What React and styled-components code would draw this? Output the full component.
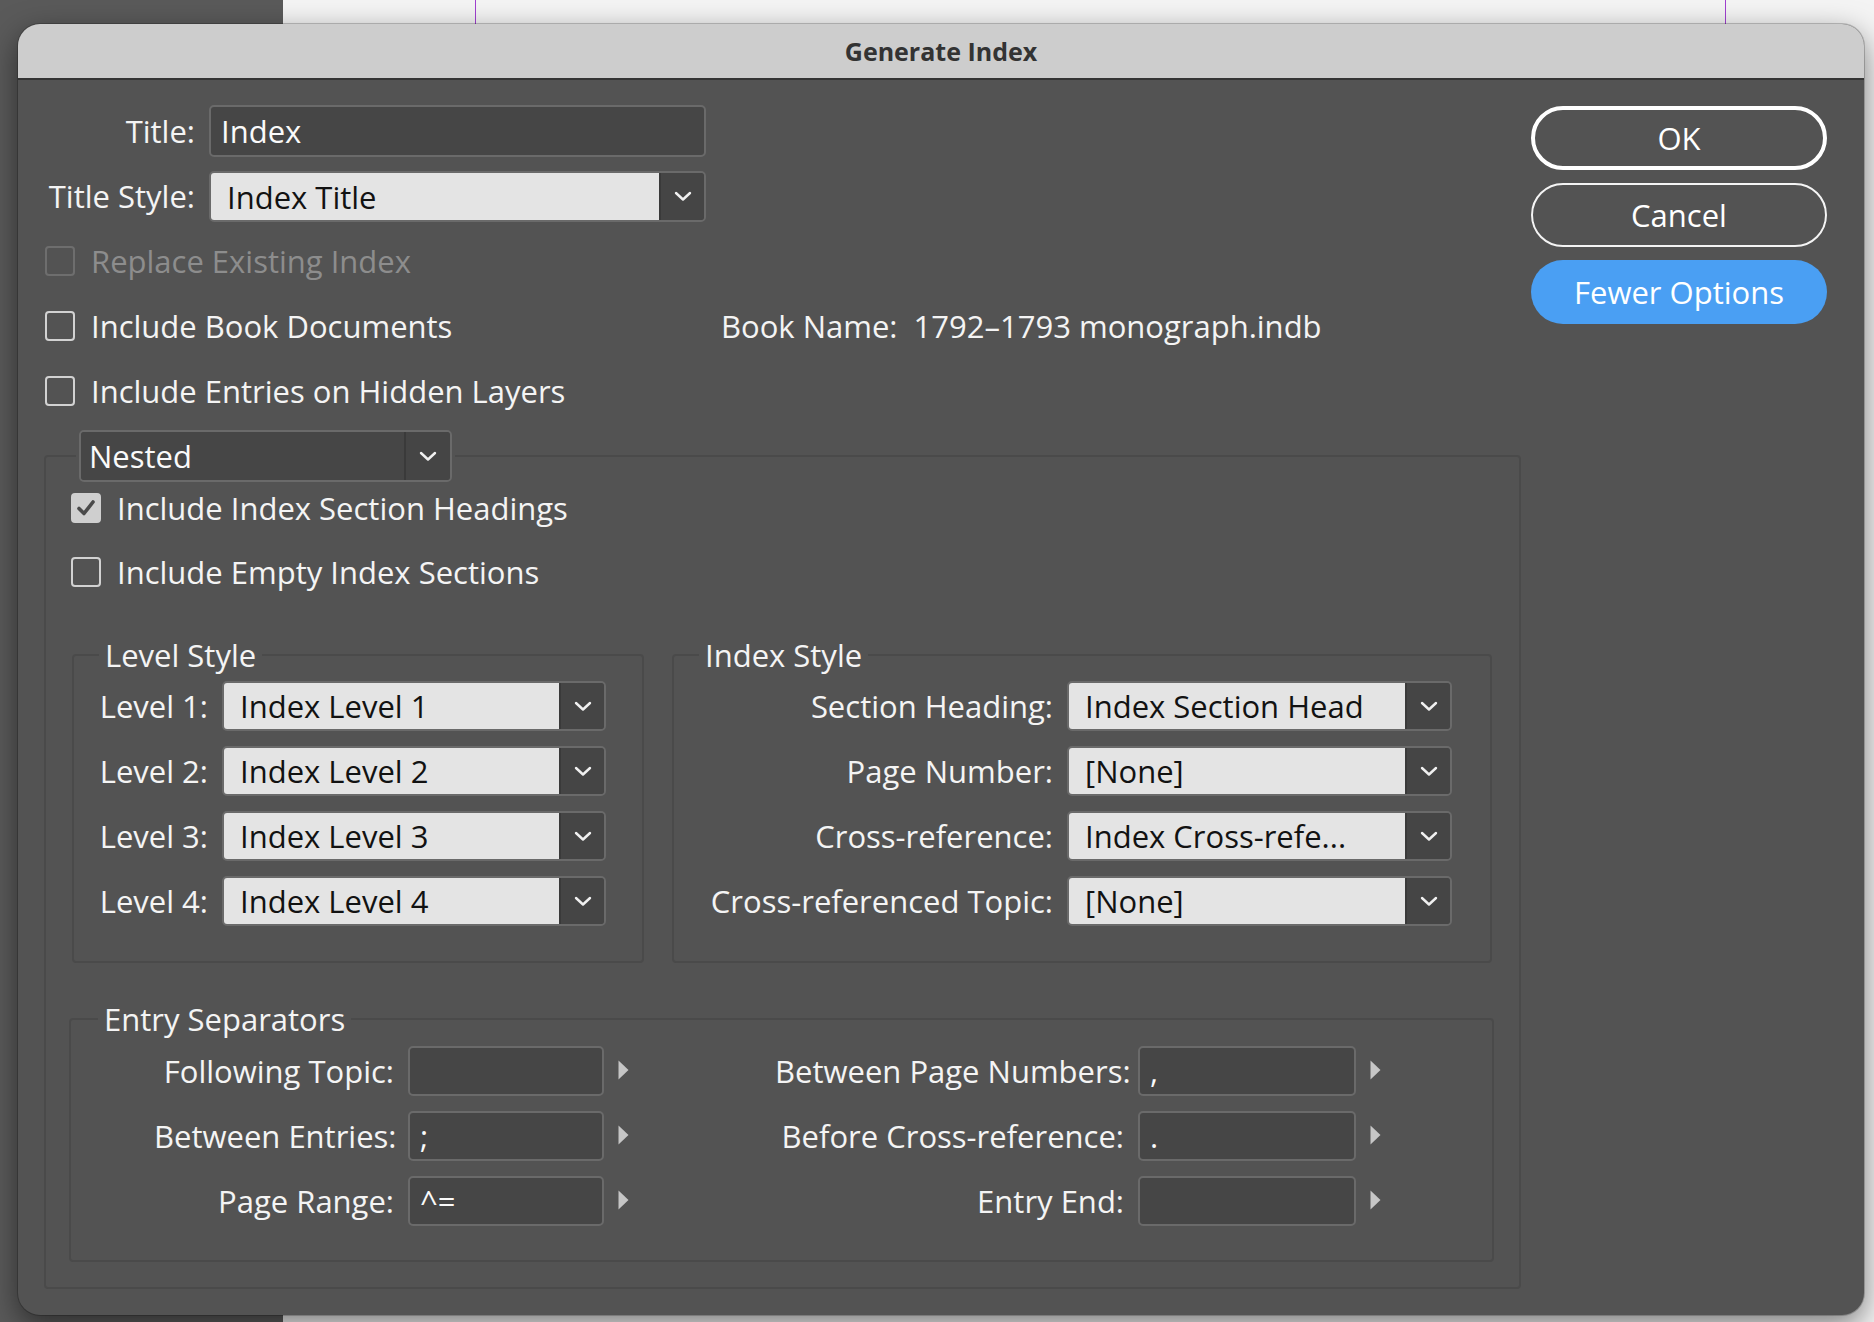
import React from 'react';
import styled, { createGlobalStyle } from 'styled-components';

const GlobalStyle = createGlobalStyle`
  html, body { margin: 0; padding: 0; }
  body {
    width: 1874px;
    height: 1322px;
    overflow: hidden;
    font-family: "Open Sans", "Noto Sans", "DejaVu Sans", sans-serif;
    background:
      linear-gradient(to right, transparent 475px, #a040d0 475px, #a040d0 476px, transparent 476px, transparent 1725px, #a040d0 1725px, #a040d0 1726px, transparent 1726px) top left / 100% 40px no-repeat,
      linear-gradient(to right, #5a5a5a 0, #5a5a5a 283px, #f4f4f4 283px);
  }
  * { box-sizing: border-box; }
`;

const Dialog = styled.div`
  margin: 24px 0 0 18px;
  width: 1846px;
  background: #535353;
  border-radius: 22px;
  overflow: hidden;
  box-shadow: 0 10px 30px rgba(0, 0, 0, 0.5), 0 0 0 1px rgba(0, 0, 0, 0.2);
`;

const TitleBar = styled.div`
  height: 56px;
  background: #cdcdcd;
  border-bottom: 2px solid #343434;
  display: flex;
  align-items: center;
  justify-content: center;
  font-size: 25px;
  font-weight: 700;
  color: #333333;
`;

const Body = styled.div`
  display: flex;
  padding: 25px 37px 26px 26px;
  color: #f4f4f4;
  font-size: 31px;
`;

const Main = styled.div`
  flex: 1;
  display: flex;
  flex-direction: column;
`;

const FieldGrid = styled.div`
  display: grid;
  grid-template-columns: 151px 497px;
  column-gap: 14px;
  row-gap: 14px;
  align-items: center;
`;

const Label = styled.div`
  text-align: right;
  white-space: nowrap;
  line-height: 1;
`;

const TextBox = styled.div`
  height: ${p => p.$h || 52}px;
  background: #464646;
  border: 2px solid #6a6a6a;
  border-radius: 5px;
  padding: 0 10px;
  display: flex;
  align-items: center;
  color: #fafafa;
  white-space: nowrap;
`;

const SelectBox = styled.div`
  display: flex;
  height: ${p => p.$h || 50}px;
  width: ${p => (p.$w ? `${p.$w}px` : 'auto')};
  border: 2px solid #6a6a6a;
  border-radius: 5px;
  overflow: hidden;
`;

const SelectValue = styled.div`
  flex: 1;
  display: flex;
  align-items: center;
  padding-left: ${p => (p.$light ? 16 : 8)}px;
  background: ${p => (p.$light ? '#e4e4e4' : '#464646')};
  color: ${p => (p.$light ? '#121212' : '#fafafa')};
  white-space: nowrap;
`;

const SelectArrow = styled.div`
  width: ${p => p.$aw || 44}px;
  background: #454545;
  border-left: 2px solid #3a3a3a;
  display: flex;
  align-items: center;
  justify-content: center;
`;

const Chevron = () => (
  <svg width="18" height="11" viewBox="0 0 18 11">
    <polyline points="2,2 9,8.5 16,2" fill="none" stroke="#f0f0f0" strokeWidth="2.4" strokeLinecap="round" strokeLinejoin="round" />
  </svg>
);

const Select = ({ value, light, h, w, aw }) => (
  <SelectBox $h={h} $w={w}>
    <SelectValue $light={light}>{value}</SelectValue>
    <SelectArrow $aw={aw}>
      <Chevron />
    </SelectArrow>
  </SelectBox>
);

const CheckList = styled.div`
  display: flex;
  flex-direction: column;
  gap: ${p => p.$gap || 25}px;
  margin-top: ${p => p.$mt || 0}px;
`;

const CheckRow = styled.div`
  display: flex;
  align-items: center;
  height: 40px;
  color: ${p => (p.$disabled ? '#8d8d8d' : '#f4f4f4')};
  white-space: nowrap;
`;

const CheckItem = styled.div`
  display: flex;
  align-items: center;
  gap: 16px;
  width: ${p => (p.$w ? `${p.$w}px` : 'auto')};
  margin-left: ${p => p.$ml ?? 1}px;
`;

const Box = styled.div`
  width: 30px;
  height: 30px;
  border-radius: 4px;
  border: 2px solid ${p => (p.$checked ? '#cfcfcf' : p.$disabled ? '#6e6e6e' : '#d2d2d2')};
  background: ${p => (p.$checked ? '#cfcfcf' : 'transparent')};
  display: flex;
  align-items: center;
  justify-content: center;
`;

const Check = ({ checked, disabled, children, w, ml }) => (
  <CheckItem $w={w} $ml={ml}>
    <Box $checked={checked} $disabled={disabled}>
      {checked && (
        <svg width="20" height="18" viewBox="0 0 20 18">
          <polyline points="3,9.5 8,14.5 17,3" fill="none" stroke="#4a4a4a" strokeWidth="3.6" strokeLinecap="round" strokeLinejoin="round" />
        </svg>
      )}
    </Box>
    <span>{children}</span>
  </CheckItem>
);

const Group = styled.fieldset`
  margin: ${p => p.$margin || '0'};
  min-width: 0;
  width: ${p => (p.$w ? `${p.$w}px` : 'auto')};
  border: 2px solid #4a4a4a;
  border-radius: 4px;
  padding: ${p => p.$pad};
`;

const Legend = styled.legend`
  padding: 0 ${p => (p.$px !== undefined ? p.$px : 6)}px;
  margin-left: ${p => p.$ml || 0}px;
  line-height: 40px;
  color: #f4f4f4;
  white-space: nowrap;
`;

const GroupsRow = styled.div`
  display: flex;
  gap: 28px;
  margin-top: 43px;
`;

const StyleGrid = styled.div`
  display: grid;
  grid-template-columns: 1fr ${p => p.$w}px;
  column-gap: 14px;
  row-gap: 15px;
  align-items: center;
`;

const SepRow = styled.div`
  display: flex;
  margin-left: 56px;
`;

const SepGrid = styled.div`
  display: grid;
  grid-template-columns: ${p => p.$labelW}px ${p => p.$inputW}px 11px;
  column-gap: 14px;
  row-gap: 15px;
  align-items: center;
  margin-left: ${p => p.$ml || 0}px;
`;

const Tri = () => (
  <svg width="11" height="20" viewBox="0 0 11 20" style={{ marginTop: -3 }}>
    <polygon points="0.5,0.5 10.5,10 0.5,19.5" fill="#c6c6c6" />
  </svg>
);

const Buttons = styled.div`
  width: 298px;
  margin-left: 10px;
  display: flex;
  flex-direction: column;
  gap: 13px;
  padding-top: 1px;
`;

const Button = styled.button`
  height: 64px;
  border-radius: 32px;
  font-family: inherit;
  font-size: 31px;
  color: #ffffff;
  background: ${p => (p.$blue ? '#4a9ff3' : 'transparent')};
  border: ${p => (p.$blue ? 'none' : p.$default ? '4px solid #ffffff' : '2.5px solid #f4f4f4')};
  padding: 0;
  cursor: default;
`;

const levels = ['Index Level 1', 'Index Level 2', 'Index Level 3', 'Index Level 4'];
const indexStyles = [
  ['Section Heading:', 'Index Section Head'],
  ['Page Number:', '[None]'],
  ['Cross-reference:', 'Index Cross-refe...'],
  ['Cross-referenced Topic:', '[None]'],
];
const sepLeft = [
  ['Following Topic:', ''],
  ['Between Entries:', ';'],
  ['Page Range:', '^='],
];
const sepRight = [
  ['Between Page Numbers:', ','],
  ['Before Cross-reference:', '.'],
  ['Entry End:', ''],
];

export default function App() {
  return (
    <>
      <GlobalStyle />
      <Dialog>
        <TitleBar>Generate Index</TitleBar>
        <Body>
          <Main>
            <FieldGrid>
              <Label>Title:</Label>
              <TextBox>Index</TextBox>
              <Label>Title Style:</Label>
              <Select value="Index Title" light h={51} aw={45} />
            </FieldGrid>

            <CheckList $mt={19} $gap={25}>
              <CheckRow $disabled>
                <Check disabled>Replace Existing Index</Check>
              </CheckRow>
              <CheckRow>
                <Check w={676}>Include Book Documents</Check>
                <span>Book Name:&nbsp; 1792–1793 monograph.indb</span>
              </CheckRow>
              <CheckRow>
                <Check>Include Entries on Hidden Layers</Check>
              </CheckRow>
            </CheckList>

            <Group $margin="19px 0 0 0" $pad="6px 25px 25px 26px">
              <Legend $px={3} $ml={4}>
                <Select value="Nested" h={52} w={373} aw={46} />
              </Legend>
              <CheckList $gap={24}>
                <CheckRow>
                  <Check checked ml={-1}>Include Index Section Headings</Check>
                </CheckRow>
                <CheckRow>
                  <Check ml={-1}>Include Empty Index Sections</Check>
                </CheckRow>
              </CheckList>

              <GroupsRow>
                <Group $w={572} $pad="6px 36px 35px 22px">
                  <Legend $ml={3}>Level Style</Legend>
                  <StyleGrid $w={384}>
                    {levels.map((v, i) => (
                      <React.Fragment key={v}>
                        <Label>{`Level ${i + 1}:`}</Label>
                        <Select value={v} light h={50} aw={45} />
                      </React.Fragment>
                    ))}
                  </StyleGrid>
                </Group>
                <Group $w={820} $pad="6px 38px 35px 25px">
                  <Legend>Index Style</Legend>
                  <StyleGrid $w={385}>
                    {indexStyles.map(([l, v]) => (
                      <React.Fragment key={l}>
                        <Label>{l}</Label>
                        <Select value={v} light h={50} aw={45} />
                      </React.Fragment>
                    ))}
                  </StyleGrid>
                </Group>
              </GroupsRow>

              <Group $w={1425} $margin="36px 0 0 -3px" $pad="7px 20px 34px 27px">
                <Legend>Entry Separators</Legend>
                <SepRow>
                  <SepGrid $labelW={240} $inputW={196}>
                    {sepLeft.map(([l, v]) => (
                      <React.Fragment key={l}>
                        <Label>{l}</Label>
                        <TextBox $h={50}>{v}</TextBox>
                        <Tri />
                      </React.Fragment>
                    ))}
                  </SepGrid>
                  <SepGrid $labelW={349} $inputW={218} $ml={146}>
                    {sepRight.map(([l, v]) => (
                      <React.Fragment key={l}>
                        <Label>{l}</Label>
                        <TextBox $h={50}>{v}</TextBox>
                        <Tri />
                      </React.Fragment>
                    ))}
                  </SepGrid>
                </SepRow>
              </Group>
            </Group>
          </Main>

          <Buttons>
            <Button $default>OK</Button>
            <Button>Cancel</Button>
            <Button $blue>Fewer Options</Button>
          </Buttons>
        </Body>
      </Dialog>
    </>
  );
}
